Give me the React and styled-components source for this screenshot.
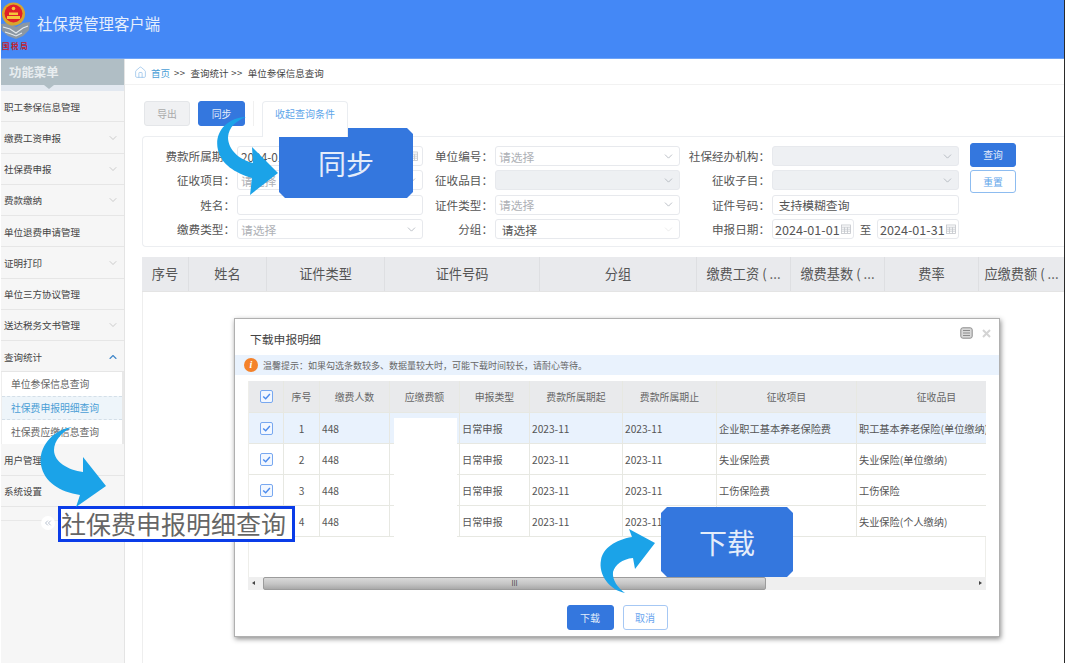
import React from "react";
import styled, { createGlobalStyle } from "styled-components";
import { ChevronDown, ChevronUp, ChevronsLeft, House } from "lucide-react";

const Global = createGlobalStyle`
  html, body { margin: 0; padding: 0; background: #fff; }
  * { box-sizing: border-box; }
  body { font-family: "Noto Sans CJK SC", "Noto Sans", sans-serif; }
`;

const Page = styled.div`
  position: relative; width: 1080px; height: 663px; overflow: hidden; background: #fff;
`;
const Frame = styled.div`
  width: 1065px; height: 663px; padding-left: 1px; border-right: 1.5px solid #2a2a2a;
  display: flex; flex-direction: column;
`;
const Header = styled.header`
  height: 59px; flex: none; background: #4488f6; display: flex; align-items: flex-start;
  border-bottom: 1px solid #6ea3f7; position: relative;
`;
const LogoWrap = styled.div`
  width: 31px; height: 54px; position: relative; flex: none;
`;
const LogoText = styled.span`
  position: absolute; left: 1px; top: 40px; width: 30px; font-size: 7.5px; line-height: 11px;
  font-weight: 700; color: #c2202a; letter-spacing: 1.6px; white-space: nowrap;
`;
const AppTitle = styled.h1`
  margin: 13px 0 0 5px; font-size: 15.4px; line-height: 20px; font-weight: 400; color: #e6effc;
`;
const Body = styled.div`flex: 1; display: flex; min-height: 0;`;
const Sidebar = styled.aside`
  width: 124px; flex: none; background: #f6f6f6; border-right: 1px solid #e4e4e4;
  display: flex; flex-direction: column;
`;
const MenuHead = styled.div`
  height: 26px; background: #b0bec5; color: #e8edf0; font-size: 12.4px; font-weight: 700;
  line-height: 27px; padding-left: 8px; flex: none;
`;
const MenuStrip = styled.div`
  height: 6px; background: #e2e8f0; position: relative; flex: none;
  &::after {
    content: ""; position: absolute; left: 43px; top: 0; border: 5px solid transparent;
    border-top: 4px solid #b0bec5;
  }
`;
const MenuRow = styled.div`
  height: 31.25px; flex: none; display: flex; align-items: center; justify-content: space-between;
  padding: 1px 5px 0 3px; border-bottom: 1px solid #e6e6e6;
  font-size: 9.5px; color: #444; white-space: nowrap;
  svg { color: ${p => (p.$open ? "#3f86c8" : "#b4b4b4")}; }
`;
const SubMenu = styled.div`
  height: 72px; flex: none; background: #fff; border-right: 2px solid #e8e8e8; border-left: 1px solid #eee;
`;
const SubItem = styled.div`
  height: 24px; line-height: 23px; padding-left: 9px; font-size: 9.8px; white-space: nowrap;
  color: ${p => (p.$active ? "#4a9ed6" : "#666")};
  background: ${p => (p.$active ? "#eef5fa" : "#fff")};
  border-top: 1px dashed ${p => (p.$active ? "#d4dfe8" : "transparent")};
  border-bottom: 1px dashed ${p => (p.$active ? "#d4dfe8" : "transparent")};
`;
const CollapseRow = styled.div`
  height: 14px; flex: none; border-bottom: 1px solid #e8e8e8; position: relative;
`;
const CollapseBtn = styled.div`
  position: absolute; left: 40px; top: 9px; width: 14px; height: 14px; border-radius: 50%;
  background: #fff; color: #a9b4c6; display: flex; align-items: center; justify-content: center;
`;
const Main = styled.main`flex: 1; min-width: 0; display: flex; flex-direction: column;`;
const Crumbs = styled.nav`
  height: 26px; flex: none; display: flex; align-items: center; padding: 2px 0 0 9px;
  border-bottom: 1px solid #f2f2f2; font-size: 9.5px; color: #444; white-space: nowrap;
  svg { color: #8dbce8; margin-right: 4px; }
`;
const CrumbHome = styled.span`color: #4a9ed6; margin-right: 4px;`;
const CrumbSep = styled.span`margin-right: 5px; letter-spacing: .5px;`;
const Toolbar = styled.div`
  height: 51px; flex: none; padding: 16px 0 0 19px; display: flex; align-items: flex-start;
`;
const ToolBtn = styled.div`
  width: ${p => (p.$wide ? 47 : 46)}px; height: 25px; border-radius: 3px; text-align: center;
  line-height: 24px; font-size: 9.8px; margin-right: 8px;
  color: ${p => (p.$primary ? "#e3edfb" : "#aaa")};
  background: ${p => (p.$primary ? "#3477de" : "#f0f1f3")};
  border: 1px solid ${p => (p.$primary ? "#3477de" : "#e4e6e9")};
`;
const ToolDivider = styled.div`width: 1px; height: 25px; background: #f0f0f0; margin: 0 8px 0 0;`;
const Tab = styled.div`
  width: 86px; height: 36px; border: 1px solid #eaedf1; border-bottom: 0; background: #fff;
  border-radius: 4px 4px 0 0; color: #5fa6ea; font-size: 10px; text-align: center; line-height: 24px;
  position: relative; z-index: 1;
`;
const FilterPanel = styled.section`
  margin-left: 17px; height: 111px; flex: none; padding: 9px 0 0 0;
  border: 1px solid #eceef1; border-right: 0; border-radius: 4px 0 0 4px;
  display: grid; grid-template-columns: 94px 186px 72px 185px 92px 187px 46px; column-gap: 0;
  grid-auto-rows: 20px; row-gap: 4.4px; align-items: stretch;
`;
const FieldLabel = styled.label`
  font-size: 11.6px; line-height: 20px; color: #555; text-align: right; padding-right: 2px; white-space: nowrap;
`;
const Field = styled.div`
  height: 20px; display: flex; align-items: center; justify-content: space-between; padding: 0 4px 0 3px;
  border: 1px solid #e7e9ed; border-radius: 3px; font-size: 11.8px; white-space: nowrap;
  background: ${p => (p.$disabled ? "#eef0f3" : "#fff")};
  color: ${p => (p.$muted ? "#aeb1b6" : "#555")};
  svg { color: #a8adb5; flex: none; }
`;
const DateRange = styled.div`display: flex; align-items: center; justify-content: space-between; font-size: 11.5px; color: #555;`;
const DateField = styled(Field)`width: 82px; font-size: 12.6px; padding: 0 2px 0 2px;`;
const ActionCol = styled.div`
  grid-column: 7; grid-row: 1 / span 2; margin: -3px 0 0 11px; width: 46px;
  display: flex; flex-direction: column; gap: 3px; position: relative;
`;
const ActionBtn = styled.div`
  height: ${p => (p.$primary ? 24 : 23)}px; border-radius: 3px; font-size: 9.8px; text-align: center; line-height: 22px;
  color: ${p => (p.$primary ? "#e3edfb" : "#5fa6ea")};
  background: ${p => (p.$primary ? "#3477de" : "#fff")};
  border: 1px solid ${p => (p.$primary ? "#3477de" : "#8dbcf0")};
`;
const GridHead = styled.div`
  margin: 10px 0 0 17px; height: 35px; flex: none; background: #e9eaed; display: flex; border-bottom: 1px solid #e4e4e4;
`;
const HeadCell = styled.div`
  width: ${p => p.$w}px; flex: none; border-right: 1px solid #dedfe2; text-align: center; line-height: 34px;
  font-size: 13.2px; color: #555; white-space: nowrap; overflow: hidden;
  &:last-child { border-right: 0; }
`;
const GridBody = styled.div`flex: 1; margin-left: 17px; border-left: 1px solid #eee;`;

const Dialog = styled.div`
  position: absolute; left: 234px; top: 318px; width: 766px; height: 319px; background: #fff;
  border: 1px solid #b0b0b0; box-shadow: 1px 2px 5px rgba(0,0,0,.45);
  display: flex; flex-direction: column; align-items: stretch;
`;
const DialogHead = styled.div`
  height: 36px; flex: none; display: flex; align-items: center; justify-content: space-between;
  padding: 2px 8px 0 15px; font-size: 11.8px; color: #444;
`;
const HeadTools = styled.div`display: flex; align-items: center; gap: 9px; margin-top: -10px;`;
const Notice = styled.div`
  height: 20px; flex: none; background: #e9f2fd; display: flex; align-items: center; gap: 5px;
  padding-left: 9px; font-size: 9px; color: #666; white-space: nowrap;
`;
const InfoDot = styled.span`
  width: 14px; height: 14px; border-radius: 50%; background: #f4822a; color: #fff; font-size: 10px;
  font-weight: 700; font-style: italic; text-align: center; line-height: 14px; flex: none; font-family: "Liberation Serif", serif;
`;
const TableWrap = styled.div`
  margin: 6px 0 0 13px; width: 738px; height: 209px; flex: none; overflow: hidden; position: relative;
  display: flex; flex-direction: column;
`;
const Rows = styled.div`flex: 1; min-height: 0; border-left: 1px solid #eeeeea; border-right: 1px solid #eeeeea;`;
const Row = styled.div`
  display: flex; height: ${p => (p.$head ? 32 : 31)}px; width: max-content;
  background: ${p => (p.$head ? "#e9eaec" : p.$selected ? "#e9f2fd" : "#fff")};
  border-bottom: 1px solid #e7e8e2;
`;
const Cell = styled.div`
  width: ${p => p.$w}px; flex: none; display: flex; align-items: center;
  justify-content: ${p => (p.$left ? "flex-start" : "center")};
  padding: 0 ${p => (p.$left ? 2 : 0)}px; border-right: 1px solid #e7e8e2; white-space: nowrap; overflow: hidden;
  font-size: ${p => (p.$head ? 9.9 : 10.2)}px; color: ${p => (p.$head ? "#666" : "#555")};
`;
const Mask = styled.div`
  position: absolute; left: 146px; top: 37px; width: 63px; height: 120px; background: #fff;
`;
const Check = styled.span`
  width: 13px; height: 13px; border: 1px solid #78a8f0; border-radius: 2px; background: #f2f7ff;
  display: flex; align-items: center; justify-content: center;
`;
const ScrollBar = styled.div`
  height: 13px; flex: none; background: #efefef; display: flex; align-items: center; position: relative;
`;
const ScrollArrow = styled.span`
  position: absolute; ${p => p.$side}: 4px; top: 4px; width: 0; height: 0;
  border-top: 2.5px solid transparent; border-bottom: 2.5px solid transparent;
  ${p => (p.$side === "left" ? "border-right" : "border-left")}: 3px solid #444;
`;
const ScrollThumb = styled.div`
  position: absolute; left: 15px; top: 0; width: 503px; height: 13px; border: 1px solid #9c9c9c; border-radius: 2px;
  background: linear-gradient(#d9d9d9, #c4c4c4 55%, #a9a9a9);
  display: flex; align-items: center; justify-content: center; font-size: 7px; color: #444; line-height: 1;
`;
const DialogFoot = styled.div`
  flex: none; margin-top: 15px; display: flex; justify-content: center; gap: 9px;
`;
const FootBtn = styled.div`
  width: ${p => (p.$primary ? 47 : 45)}px; height: 25px; border-radius: 3px; text-align: center; line-height: 23px; font-size: 10px;
  color: ${p => (p.$primary ? "#e3edfb" : "#6aa6ef")};
  background: ${p => (p.$primary ? "#3477de" : "#fff")};
  border: 1px solid ${p => (p.$primary ? "#3477de" : "#a6c8f4")};
`;
const Callout = styled.div`
  position: absolute; left: ${p => p.$x}px; top: ${p => p.$y}px; width: ${p => p.$w}px; height: 70px;
  background: #3477de; color: #e4edfa; font-size: 28px; line-height: 70px; text-align: center;
  clip-path: polygon(6px 0, calc(100% - 6px) 0, 100% 6px, 100% calc(100% - 6px), calc(100% - 6px) 100%, 6px 100%, 0 calc(100% - 6px), 0 6px);
`;
const ArrowSvg = styled.svg`
  position: absolute; left: ${p => p.$x}px; top: ${p => p.$y}px; fill: #1ba3e8;
`;
const BigLabel = styled.div`
  position: absolute; left: 58px; top: 506px; width: 237px; height: 36px; background: #fff;
  border: 3.5px solid #0a3ce8; color: #666; font-size: 25px; line-height: 28px; padding-left: 0; white-space: nowrap;
`;

const Caret = () => <ChevronDown size={13} strokeWidth={1.4} />;
const Cal = () => (
  <svg width="10" height="10" viewBox="0 0 10 10" fill="none" stroke="#c2c5ca" strokeWidth=".8">
    <rect x=".5" y="1" width="9" height="8.5" />
    <path d="M.5 3.2h9M.5 5.2h9M.5 7.2h9M3.5 3.2v6M6.5 3.2v6" />
  </svg>
);
const Tick = () => (
  <svg width="9" height="9" viewBox="0 0 9 9" fill="none" stroke="#4c8bec" strokeWidth="1.4">
    <path d="M1.2 4.4 3.7 6.8 7.9 2" />
  </svg>
);
const Logo = () => (
  <LogoWrap>
    <svg width="31" height="40" viewBox="0 0 31 40">
      <path d="M0 24 8 23 15 27 22 23 29 22 28 30 22 36 15 39 7 36 1 31Z" fill="#8b97a3" />
      <path d="M2 27 9 29 15 33 22 28 27 26M4 32 10 34 15 36 21 33" stroke="#e4e9ee" strokeWidth="1.1" fill="none" />
      <circle cx="12.5" cy="14" r="11.5" fill="#d9a52c" />
      <circle cx="12.5" cy="13.5" r="9" fill="#e0202a" />
      <path d="M6 16h13v3H6zM8 12.5h9v2.5H8z" fill="#f5c63a" />
      <circle cx="12.5" cy="8.5" r="1.8" fill="#f5c63a" />
    </svg>
    <LogoText>国税局</LogoText>
  </LogoWrap>
);

const menuTop = [
  ["职工参保信息管理", false], ["缴费工资申报", true], ["社保费申报", true], ["费款缴纳", true],
  ["单位退费申请管理", false], ["证明打印", true], ["单位三方协议管理", false], ["送达税务文书管理", true],
];
const headCols = [
  ["序号", 47], ["姓名", 78], ["证件类型", 118], ["证件号码", 155], ["分组", 157],
  ["缴费工资 ( ...", 94], ["缴费基数 ( ...", 94], ["费率", 94], ["应缴费额 ( ...", 85],
];
const W = [35, 36, 70, 70, 70, 93, 94, 140, 160];
const dHead = ["序号", "缴费人数", "应缴费额", "申报类型", "费款所属期起", "费款所属期止", "征收项目", "征收品目"];
const dRows = [
  ["1", "企业职工基本养老保险费", "职工基本养老保险(单位缴纳)"],
  ["2", "失业保险费", "失业保险(单位缴纳)"],
  ["3", "工伤保险费", "工伤保险"],
  ["4", "", "失业保险(个人缴纳)"],
];

export default function App() {
  return (
    <Page>
      <Global />
      <Frame>
        <Header>
          <Logo />
          <AppTitle>社保费管理客户端</AppTitle>
        </Header>
        <Body>
          <Sidebar>
            <MenuHead>功能菜单</MenuHead>
            <MenuStrip />
            {menuTop.map(([t, c]) => (
              <MenuRow key={t}>{t}{c && <ChevronDown size={12} strokeWidth={1.3} />}</MenuRow>
            ))}
            <MenuRow $open>查询统计<ChevronUp size={12} strokeWidth={2.2} /></MenuRow>
            <SubMenu>
              <SubItem>单位参保信息查询</SubItem>
              <SubItem $active>社保费申报明细查询</SubItem>
              <SubItem>社保费应缴信息查询</SubItem>
            </SubMenu>
            <MenuRow>用户管理</MenuRow>
            <MenuRow>系统设置</MenuRow>
            <CollapseRow>
              <CollapseBtn><ChevronsLeft size={10} strokeWidth={2} /></CollapseBtn>
            </CollapseRow>
          </Sidebar>
          <Main>
            <Crumbs>
              <House size={13} strokeWidth={1.3} />
              <CrumbHome>首页</CrumbHome>
              <CrumbSep>&gt;&gt;</CrumbSep>
              <span>查询统计</span>
              <CrumbSep>&nbsp;&gt;&gt;</CrumbSep>
              <span>单位参保信息查询</span>
            </Crumbs>
            <Toolbar>
              <ToolBtn>导出</ToolBtn>
              <ToolBtn $primary $wide>同步</ToolBtn>
              <ToolDivider />
              <Tab>收起查询条件</Tab>
            </Toolbar>
            <FilterPanel>
              <ActionCol>
                <ActionBtn $primary>查询</ActionBtn>
                <ActionBtn>重置</ActionBtn>
              </ActionCol>
              <FieldLabel>费款所属期：</FieldLabel>
              <Field>2024-01<Cal /></Field>
              <FieldLabel>单位编号：</FieldLabel>
              <Field $muted>请选择<Caret /></Field>
              <FieldLabel>社保经办机构：</FieldLabel>
              <Field $disabled><span /><Caret /></Field>

              <FieldLabel>征收项目：</FieldLabel>
              <Field $muted>请选择<Caret /></Field>
              <FieldLabel>征收品目：</FieldLabel>
              <Field $disabled><span /><Caret /></Field>
              <FieldLabel>征收子目：</FieldLabel>
              <Field $disabled><span /><Caret /></Field>

              <FieldLabel>姓名：</FieldLabel>
              <Field />
              <FieldLabel>证件类型：</FieldLabel>
              <Field $muted>请选择<Caret /></Field>
              <FieldLabel>证件号码：</FieldLabel>
              <Field>&nbsp;支持模糊查询</Field>
              <span />

              <FieldLabel>缴费类型：</FieldLabel>
              <Field $muted>请选择<Caret /></Field>
              <FieldLabel>分组：</FieldLabel>
              <Field>&nbsp;请选择<ChevronDown size={13} strokeWidth={1} color="#dcdcdc" /></Field>
              <FieldLabel>申报日期：</FieldLabel>
              <DateRange>
                <DateField>2024-01-01<Cal /></DateField>
                至
                <DateField>2024-01-31<Cal /></DateField>
              </DateRange>
            </FilterPanel>
            <GridHead>
              {headCols.map(([t, w]) => <HeadCell key={t} $w={w}>{t}</HeadCell>)}
            </GridHead>
            <GridBody />
          </Main>
        </Body>
      </Frame>

      <Dialog>
        <DialogHead>
          下载申报明细
          <HeadTools>
            <svg width="13" height="12" viewBox="0 0 13 12" fill="#d8d8d8" stroke="#8c8c8c" strokeWidth="1">
              <rect x=".8" y=".8" width="11.4" height="10.4" rx="2" />
              <path d="M3 3.5h7M3 6h7M3 8.5h7" />
            </svg>
            <svg width="9" height="9" viewBox="0 0 9 9" fill="none" stroke="#d4d4d4" strokeWidth="2">
              <path d="M1 1l7 7M8 1 1 8" />
            </svg>
          </HeadTools>
        </DialogHead>
        <Notice>
          <InfoDot>i</InfoDot>
          温馨提示：如果勾选条数较多、数据量较大时，可能下载时间较长，请耐心等待。
        </Notice>
        <TableWrap>
          <Rows>
            <Row $head>
              <Cell $w={W[0]} $head><Check><Tick /></Check></Cell>
              {dHead.map((t, i) => <Cell key={t} $w={W[i + 1]} $head>{t}</Cell>)}
            </Row>
            {dRows.map(([n, a, b], idx) => (
              <Row key={n} $selected={idx === 0}>
                <Cell $w={W[0]}><Check><Tick /></Check></Cell>
                <Cell $w={W[1]}>{n}</Cell>
                <Cell $w={W[2]} $left>448</Cell>
                <Cell $w={W[3]} />
                <Cell $w={W[4]} $left>日常申报</Cell>
                <Cell $w={W[5]} $left>2023-11</Cell>
                <Cell $w={W[6]} $left>2023-11</Cell>
                <Cell $w={W[7]} $left>{a}</Cell>
                <Cell $w={W[8]} $left>{b}</Cell>
              </Row>
            ))}
          </Rows>
          <Mask />
          <ScrollBar>
            <ScrollArrow $side="left" />
            <ScrollThumb>III</ScrollThumb>
            <ScrollArrow $side="right" />
          </ScrollBar>
        </TableWrap>
        <DialogFoot>
          <FootBtn $primary>下载</FootBtn>
          <FootBtn>取消</FootBtn>
        </DialogFoot>
      </Dialog>

      <Callout $x={279} $y={128} $w={134}>同步</Callout>
      <ArrowSvg $x={205} $y={110} width="80" height="90" viewBox="205 110 80 90">
        <path d="M246 117C225 118 214 134 218 150C221 164 235 173 252 178L250 195L278 173L252 147L253 163C240 160 228 150 228 137C229 127 236 121 246 117Z" />
      </ArrowSvg>

      <BigLabel>社保费申报明细查询</BigLabel>
      <ArrowSvg $x={35} $y={420} width="80" height="90" viewBox="35 420 80 90">
        <path d="M72 427C52 430 38 448 41 465C44 482 60 492 80 495L76 507L106 486L83 457L83 472C68 470 54 462 54 450C54 441 62 432 72 427Z" />
      </ArrowSvg>

      <Callout $x={661} $y={507} $w={132}>下载</Callout>
      <ArrowSvg $x={595} $y={525} width="65" height="72" viewBox="595 525 65 72">
        <path d="M625 593C610 590 598 575 601 560C603 548 615 540 632 537L629 529L655 543L635 569L633 558C622 559 615 565 613 572C612 580 618 588 625 593Z" />
      </ArrowSvg>
    </Page>
  );
}
